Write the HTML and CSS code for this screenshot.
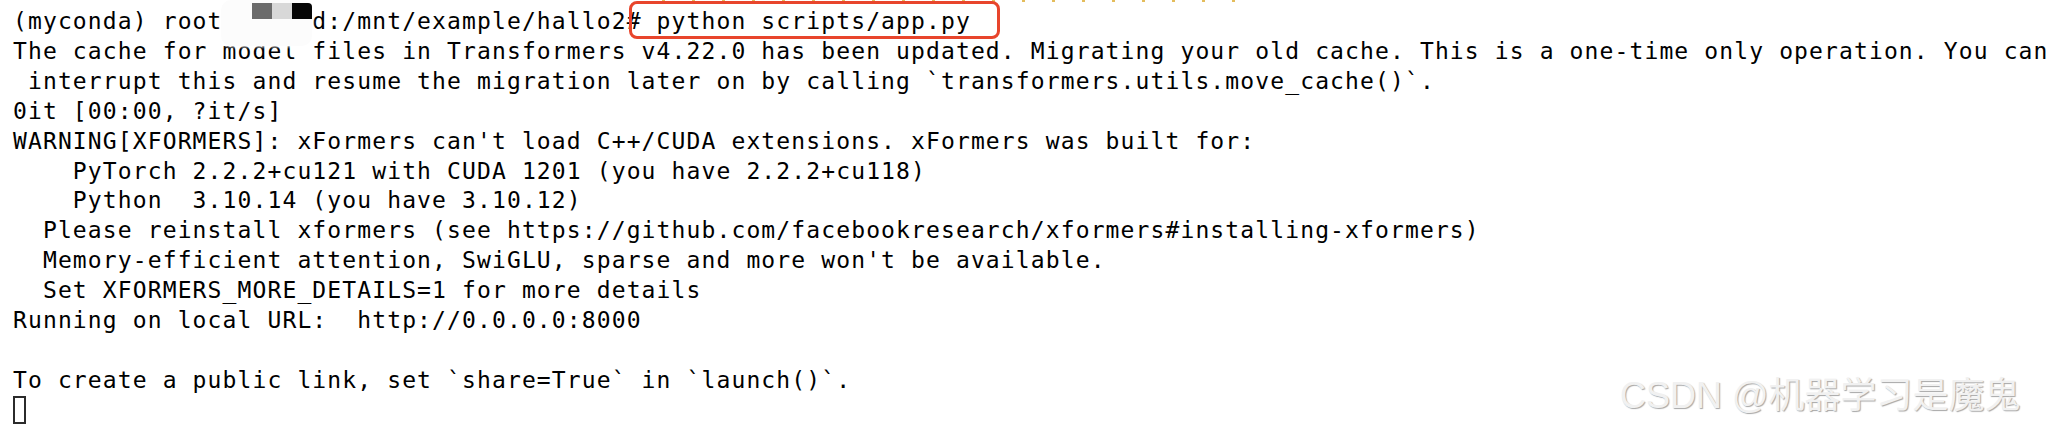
FILE: index.html
```html
<!DOCTYPE html>
<html lang="en">
<head>
<meta charset="utf-8">
<title>Terminal</title>
<link rel="stylesheet" href="styles.css">
</head>
<body>
<div class="screen">
  <div class="prev-line"></div>
  <pre class="term">(myconda) root@xxxxxd:/mnt/example/hallo2# python scripts/app.py
The cache for model files in Transformers v4.22.0 has been updated. Migrating your old cache. This is a one-time only operation. You can
 interrupt this and resume the migration later on by calling `transformers.utils.move_cache()`.
0it [00:00, ?it/s]
WARNING[XFORMERS]: xFormers can't load C++/CUDA extensions. xFormers was built for:
    PyTorch 2.2.2+cu121 with CUDA 1201 (you have 2.2.2+cu118)
    Python  3.10.14 (you have 3.10.12)
  Please reinstall xformers (see https://github.com/facebookresearch/xformers#installing-xformers)
  Memory-efficient attention, SwiGLU, sparse and more won't be available.
  Set XFORMERS_MORE_DETAILS=1 for more details
Running on local URL:  http://0.0.0.0:8000

To create a public link, set `share=True` in `launch()`.
<span class="cursor"></span></pre>
  <div class="redact">
    <span class="px px-mid"></span><span class="px px-light"></span><span class="px px-dark"></span>
  </div>
  <div class="highlight"></div>
  <div class="watermark">CSDN @机器学习是魔鬼</div>
</div>
</body>
</html>
```

FILE: styles.css
```css
html, body {
  margin: 0;
  padding: 0;
  background: #ffffff;
}

.screen {
  position: relative;
  width: 2048px;
  height: 430px;
  overflow: hidden;
  background: #ffffff;
}

.term {
  margin: 0;
  padding: 7px 0 0 13px;
  font-family: "DejaVu Sans Mono", "Liberation Mono", monospace;
  font-size: 23px;
  letter-spacing: 1.12px;
  line-height: 29.9px;
  color: #000000;
  white-space: pre;
}

.cursor {
  display: inline-block;
  width: 9px;
  height: 24px;
  border: 2px solid #2b2b2b;
  vertical-align: -6px;
}

.prev-line {
  position: absolute;
  left: 662px;
  top: 0;
  width: 600px;
  height: 2px;
  background: repeating-linear-gradient(90deg, #e4bd5c 0 3px, transparent 3px 30px);
}

.redact {
  position: absolute;
  left: 221px;
  top: 0;
  width: 91px;
  height: 46px;
  background: #fcfcfc;
  border-radius: 10px;
  box-shadow: 0 0 3px 1px rgba(255, 255, 255, 0.9);
  display: flex;
  align-items: flex-start;
  padding-left: 31px;
  padding-top: 3px;
  box-sizing: border-box;
}

.px {
  display: block;
  width: 20px;
  height: 16px;
}

.px-mid { background: #6b6b6b; }
.px-light { background: #d8d8d8; }
.px-dark { background: #060606; border-top-right-radius: 4px; }

.highlight {
  position: absolute;
  left: 629px;
  top: 1px;
  width: 371px;
  height: 38px;
  box-sizing: border-box;
  border: 3px solid #e8452c;
  border-radius: 8px;
}

.watermark {
  position: absolute;
  left: 1620px;
  top: 374px;
  font-family: "Liberation Sans", "Noto Sans CJK SC", sans-serif;
  font-size: 36px;
  line-height: 44px;
  color: #f1f1f1;
  text-shadow: 1px 1px 1px rgba(0, 0, 0, 0.35), -1px -1px 0 rgba(255, 255, 255, 0.9);
  white-space: nowrap;
}
```
